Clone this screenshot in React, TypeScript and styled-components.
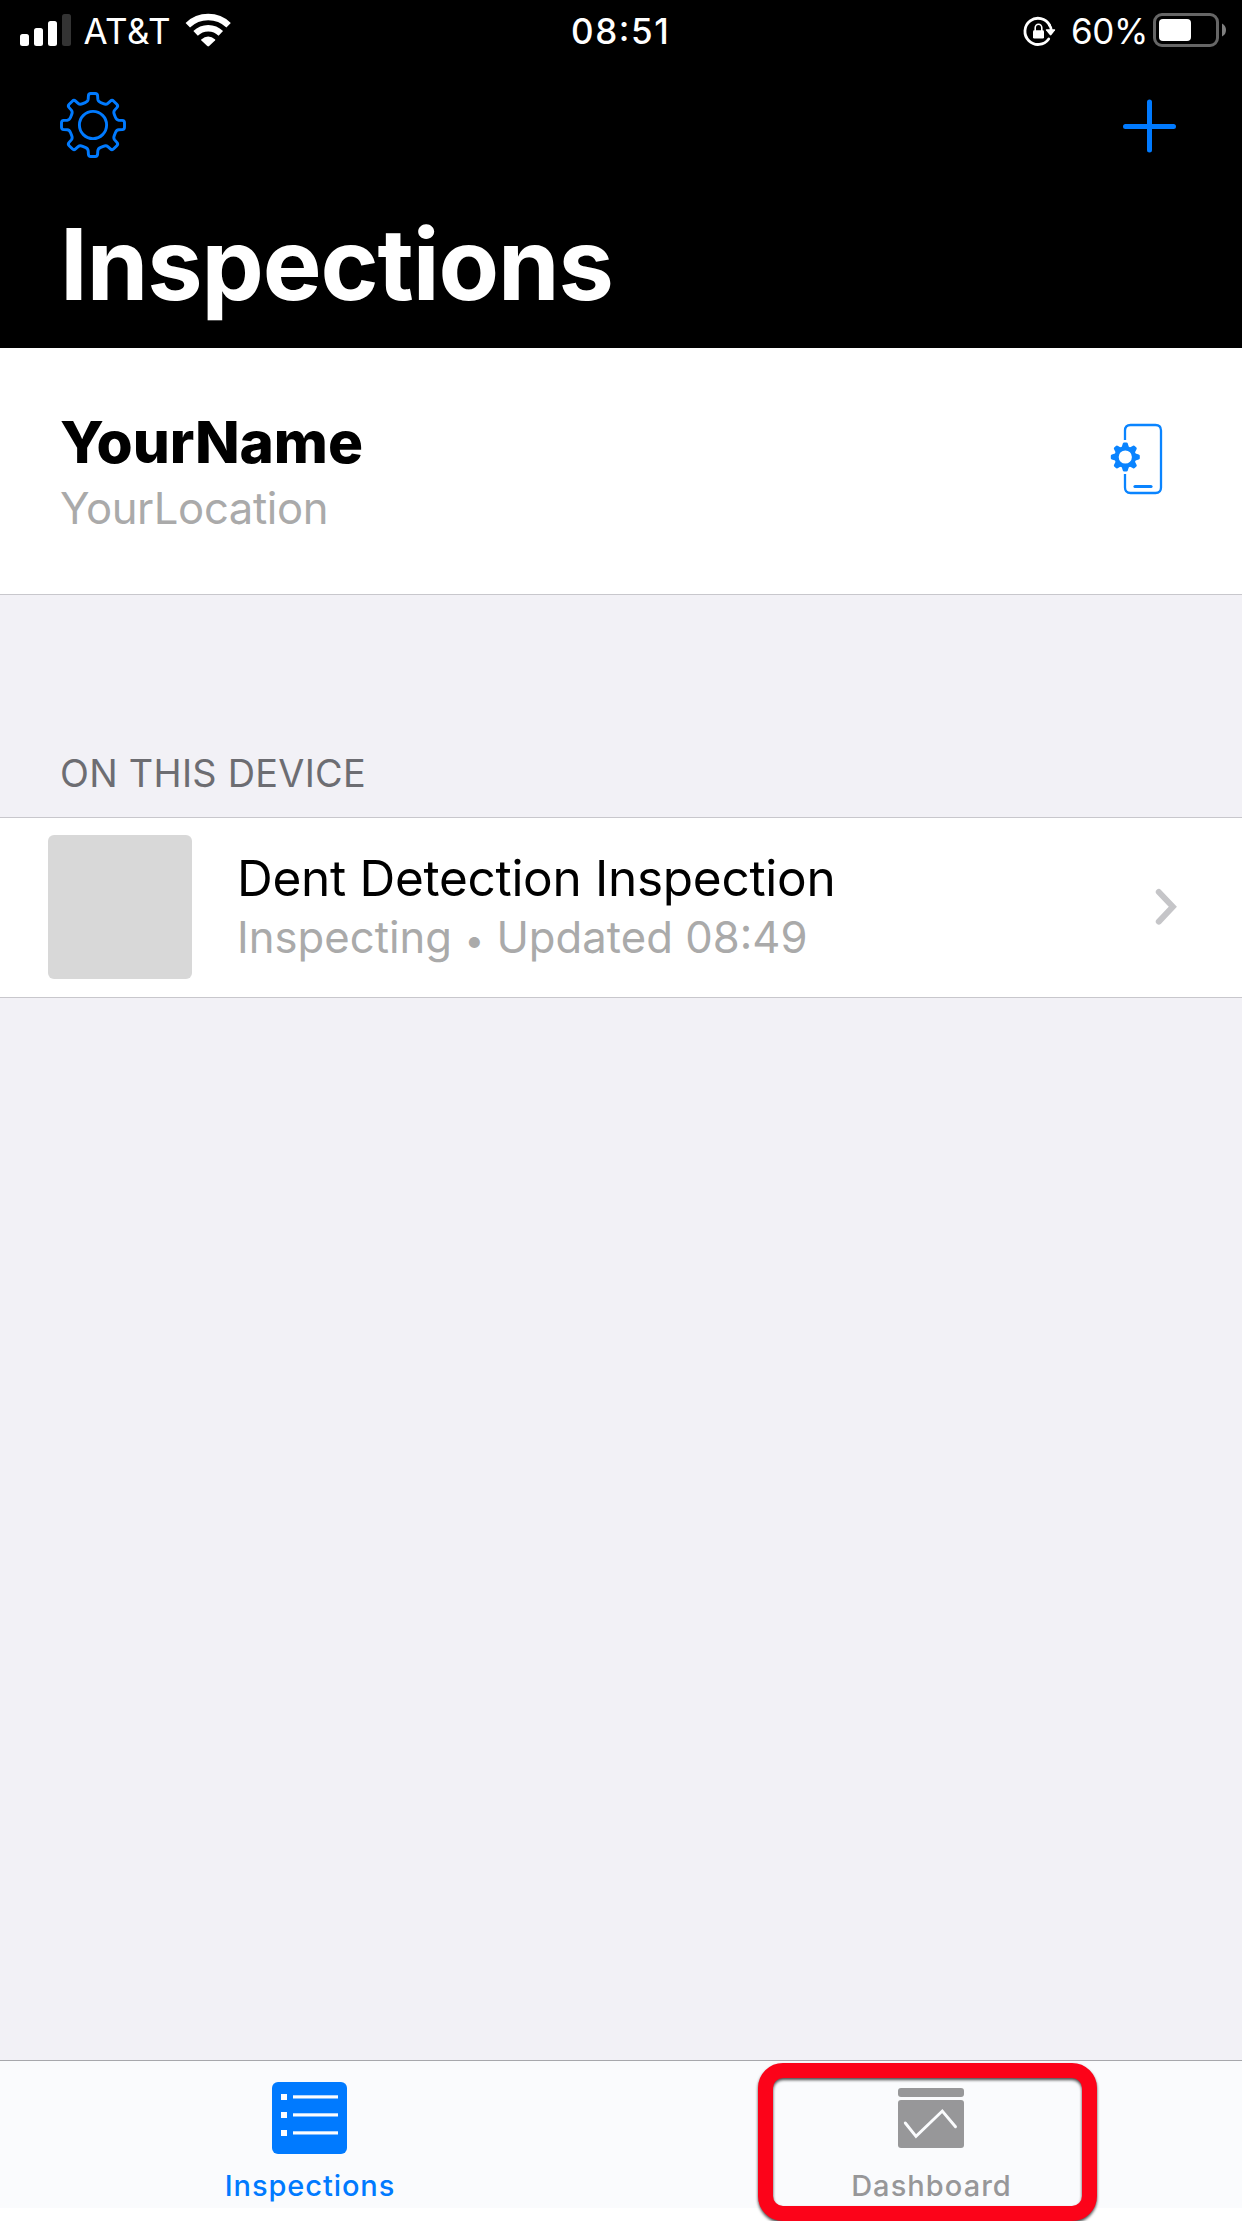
import React from "react";
import styled, { createGlobalStyle } from "styled-components";

const BLUE = "#007aff";

const GlobalStyle = createGlobalStyle`
  * { box-sizing: border-box; }
  body {
    margin: 0;
    background: #f2f1f6;
    font-family: Inter, "Liberation Sans", sans-serif;
    font-feature-settings: "calt" 1;
  }
  svg { display: block; flex: none; }
`;

const Screen = styled.div`
  width: 1242px;
  height: 2221px;
  display: flex;
  flex-direction: column;
  overflow: hidden;
  background: #f2f1f6;
`;

const Text = styled.span<{
  $size: number;
  $line: number;
  $weight?: number;
  $spacing?: number;
  $color?: string;
}>`
  display: block;
  white-space: nowrap;
  font-size: ${(p) => p.$size}px;
  line-height: ${(p) => p.$line}px;
  font-weight: ${(p) => p.$weight ?? 400};
  letter-spacing: ${(p) => p.$spacing ?? 0}px;
  color: ${(p) => p.$color ?? "#000"};
`;

const Bullet = styled.span`
  font-size: 35px;
  line-height: 1;
`;

const Header = styled.header`
  height: 348px;
  flex: none;
  background: #000;
`;

const StatusBar = styled.div`
  height: 63px;
  display: grid;
  grid-template-columns: 571px 1fr auto;
  align-items: center;
`;

const StatusLeft = styled.div`
  display: flex;
  align-items: center;
  padding-left: 20px;
`;

const Carrier = styled.div`
  width: 114px;
  padding-left: 12.5px;
`;

const StatusRight = styled.div`
  display: flex;
  align-items: center;
  padding-right: 15px;
`;

const Percent = styled.div`
  width: 97px;
  padding-left: 15px;
`;

const NavBar = styled.div`
  height: 124px;
  display: flex;
  align-items: center;
  justify-content: space-between;
  padding: 0 65px 0 58px;
`;

const TitleBar = styled.div`
  padding: 17px 0 0 60px;
`;

const ProfileRow = styled.section`
  height: 247px;
  flex: none;
  display: flex;
  justify-content: space-between;
  background: #fff;
  border-bottom: 1px solid #c8c7cc;
  padding: 59px 79px 0 60px;
`;

const ProfileName = styled.div`
  display: flex;
  flex-direction: column;
`;

const DeviceIcon = styled.div`
  padding-top: 16px;
`;

const SectionTitle = styled.div`
  flex: none;
  height: 222px;
  padding: 152px 0 0 60px;
`;

const InspectionRow = styled.section`
  height: 181px;
  flex: none;
  display: flex;
  align-items: center;
  background: #fff;
  border-top: 1px solid #c8c7cc;
  border-bottom: 1px solid #c8c7cc;
  padding: 0 64px 1px 48px;
`;

const Thumb = styled.div`
  width: 144px;
  height: 144px;
  flex: none;
  border-radius: 6px;
  background: #d8d8d8;
`;

const RowText = styled.div`
  flex: 1;
  padding-left: 45px;
`;

const Spacer = styled.div`
  flex: 1;
`;

const TabBar = styled.nav`
  height: 161px;
  flex: none;
  display: grid;
  grid-template-columns: 1fr 1fr;
  border-top: 1px solid #a7a7ac;
  background: linear-gradient(#fafbfd 0 147px, #fff 147px);
`;

const Tab = styled.div<{ $inset?: number }>`
  position: relative;
  display: flex;
  flex-direction: column;
  align-items: center;
  padding-right: ${(p) => p.$inset ?? 0}px;
`;

const TabIcon = styled.div`
  height: 103px;
  padding: 21px 1px 0 0;
`;

const Highlight = styled.div`
  position: absolute;
  left: 137px;
  top: 2px;
  width: 339px;
  height: 158px;
  border: 15px solid #fc0319;
  border-radius: 25px;
  filter: drop-shadow(0 2px 1.5px rgba(0, 0, 0, 0.7));
`;

const rotate = (x: number, y: number, deg: number) => {
  const a = (deg * Math.PI) / 180;
  const rx = x * Math.cos(a) - y * Math.sin(a);
  const ry = x * Math.sin(a) + y * Math.cos(a);
  return `${rx.toFixed(2)} ${ry.toFixed(2)}`;
};

const gearOutline = () => {
  let d = "";
  for (let i = 0; i < 8; i++) {
    const p = (x: number, y: number) => rotate(x, y, i * 45);
    d += `${i ? "L" : "M"}${p(-7.8, -22.4)} Q${p(-5, -23.5)} ${p(-4.8, -25.8)} `;
    d += `L${p(-4.6, -29.2)} Q${p(-4.5, -31.5)} ${p(-2.2, -31.5)} `;
    d += `L${p(2.2, -31.5)} Q${p(4.5, -31.5)} ${p(4.6, -29.2)} `;
    d += `L${p(4.8, -25.8)} Q${p(5, -23.5)} ${p(7.8, -22.4)} `;
  }
  return d + "Z";
};

const SignalIcon = () => (
  <svg width="51" height="35" viewBox="0 0 51 35">
    <rect x="0" y="20" width="9" height="12" rx="2.5" fill="#fff" />
    <rect x="14" y="14" width="9" height="18" rx="2.5" fill="#fff" />
    <rect x="28" y="7" width="9" height="25" rx="2.5" fill="#fff" />
    <rect x="42" y="0" width="9" height="32" rx="2.5" fill="#333" />
  </svg>
);

const WifiIcon = () => (
  <svg width="46" height="37" viewBox="0 0 46 37">
    <g fill="none" stroke="#fff">
      <path d="M2.8 12.2A29.5 29.5 0 0 1 43.6 12.2" strokeWidth="6.4" />
      <path d="M10.6 20.4A18 18 0 0 1 35.8 20.4" strokeWidth="6.4" />
    </g>
    <path d="M16.2 26.4Q23.2 20.6 30.2 26.4Q30.5 27 30 27.6L24.1 33Q23.2 33.8 22.3 33L16.4 27.6Q15.9 27 16.2 26.4Z" fill="#fff" />
  </svg>
);

const RotationLockIcon = () => (
  <svg width="33" height="34" viewBox="0 0 33 34">
    <path d="M26.6 10.2A13.1 13.1 0 1 0 25.7 24" fill="none" stroke="#fff" strokeWidth="2.8" strokeLinecap="round" />
    <path d="M26 9.5Q28 12 28.2 15" fill="none" stroke="#fff" strokeWidth="2.8" />
    <path d="M23.5 14.2H31.6Q32.6 14.3 32 15.2L28.4 20Q27.6 20.9 26.8 20L23 15.2Q22.4 14.3 23.5 14.2Z" fill="#fff" />
    <rect x="10" y="15.3" width="11" height="8.3" rx="1.3" fill="#fff" />
    <path d="M12.2 16V12.7A3.3 3.5 0 0 1 18.8 12.7V16" fill="none" stroke="#fff" strokeWidth="1.6" />
  </svg>
);

const BatteryIcon = () => (
  <svg width="74" height="37" viewBox="0 0 74 37">
    <rect x="1.5" y="1.5" width="63" height="31" rx="7.5" fill="none" stroke="#666" strokeWidth="3" />
    <rect x="6" y="6" width="32" height="22" rx="4" fill="#fff" />
    <path d="M69 10.5Q73 12.5 73 17T69 23.5Z" fill="#7f7f7f" />
  </svg>
);

const SettingsIcon = () => (
  <svg width="70" height="70" viewBox="-35 -35 70 70">
    <g fill="none" stroke={BLUE} strokeWidth="2.9" strokeLinejoin="round">
      <path d={gearOutline()} />
      <circle r="13.6" />
    </g>
  </svg>
);

const PlusIcon = () => (
  <svg width="55" height="55" viewBox="0 0 55 55">
    <path d="M3.5 28.5H51.5M27.5 4V52" stroke={BLUE} strokeWidth="5" strokeLinecap="round" />
  </svg>
);

const PhoneGearIcon = () => (
  <svg width="54" height="72" viewBox="0 0 54 72">
    <g fill="none" stroke="#0a84ff" strokeWidth="2.3">
      <path d="M16 17V7.5Q16 2 21.5 2H46.5Q52 2 52 7.5V64.5Q52 70 46.5 70H21.5Q16 70 16 64.5V51" />
      <path d="M26 63.5H42" strokeWidth="3.2" strokeLinecap="round" />
    </g>
    <g transform="translate(16.3 34)">
      {[0, 45, 90, 135, 180, 225, 270, 315].map((a) => (
        <path key={a} transform={`rotate(${a})`} d="M-3.7 -9.5L-2.5 -13.4Q-2.2 -14.5 -1.2 -14.5H1.2Q2.2 -14.5 2.5 -13.4L3.7 -9.5Z" fill="#0a84ff" />
      ))}
      <circle r="8.7" fill="none" stroke="#0a84ff" strokeWidth="4.2" />
    </g>
  </svg>
);

const ChevronIcon = () => (
  <svg width="24" height="38" viewBox="0 0 24 38">
    <path d="M4.8 4L18.8 18.8L4.8 33.6" fill="none" stroke="#c5c5c8" strokeWidth="6" strokeLinecap="round" />
  </svg>
);

const ListIcon = () => (
  <svg width="75" height="72" viewBox="0 0 75 72">
    <rect width="75" height="72" rx="6" fill={BLUE} />
    {[12, 30, 48].map((y) => (
      <g key={y} fill="#fbfcfe">
        <rect x="9" y={y} width="6" height="6" />
        <rect x="21" y={y + 1.3} width="45" height="3.2" />
      </g>
    ))}
  </svg>
);

const ChartIcon = () => (
  <svg width="66" height="66" viewBox="0 0 66 66">
    <rect y="6" width="66" height="9" rx="3" fill="#979799" />
    <rect y="18" width="66" height="48" rx="3" fill="#979799" />
    <path d="M7.3 41L18 54.3L44.3 29L57.5 44.8" fill="none" stroke="#fbfcfe" strokeWidth="2.9" strokeLinecap="round" />
  </svg>
);

export default function App() {
  return (
    <Screen>
      <GlobalStyle />
      <Header>
        <StatusBar>
          <StatusLeft>
            <SignalIcon />
            <Carrier>
              <Text $size={35} $line={63} $spacing={0.45} $color="#fff">AT&amp;T</Text>
            </Carrier>
            <WifiIcon />
          </StatusLeft>
          <Text $size={35} $line={63} $weight={500} $spacing={1.6} $color="#fff">08:51</Text>
          <StatusRight>
            <RotationLockIcon />
            <Percent>
              <Text $size={35} $line={63} $spacing={-0.4} $color="#fff">60%</Text>
            </Percent>
            <BatteryIcon />
          </StatusRight>
        </StatusBar>
        <NavBar>
          <SettingsIcon />
          <PlusIcon />
        </NavBar>
        <TitleBar>
          <Text $size={98.9} $line={120} $weight={700} $spacing={-1.09} $color="#fff">Inspections</Text>
        </TitleBar>
      </Header>

      <ProfileRow>
        <ProfileName>
          <Text $size={58.4} $line={70} $weight={800} $spacing={-0.1}>YourName</Text>
          <Text $size={43.6} $line={64} $spacing={-0.36} $color="#aaa">YourLocation</Text>
        </ProfileName>
        <DeviceIcon>
          <PhoneGearIcon />
        </DeviceIcon>
      </ProfileRow>

      <SectionTitle>
        <Text $size={37.8} $line={52} $spacing={0.28} $color="#6d6d72">ON THIS DEVICE</Text>
      </SectionTitle>

      <InspectionRow>
        <Thumb />
        <RowText>
          <Text $size={49.5} $line={60} $spacing={-0.29}>Dent Detection Inspection</Text>
          <Text $size={43.6} $line={59} $spacing={0.03} $color="#aaa">
            Inspecting <Bullet>•</Bullet> Updated 08:49
          </Text>
        </RowText>
        <ChevronIcon />
      </InspectionRow>

      <Spacer />

      <TabBar>
        <Tab $inset={1}>
          <TabIcon><ListIcon /></TabIcon>
          <Text $size={29} $line={44} $weight={500} $spacing={0.92} $color={BLUE}>Inspections</Text>
        </Tab>
        <Tab>
          <TabIcon><ChartIcon /></TabIcon>
          <Text $size={29} $line={44} $weight={500} $spacing={1.05} $color="#979799">Dashboard</Text>
          <Highlight />
        </Tab>
      </TabBar>
    </Screen>
  );
}
